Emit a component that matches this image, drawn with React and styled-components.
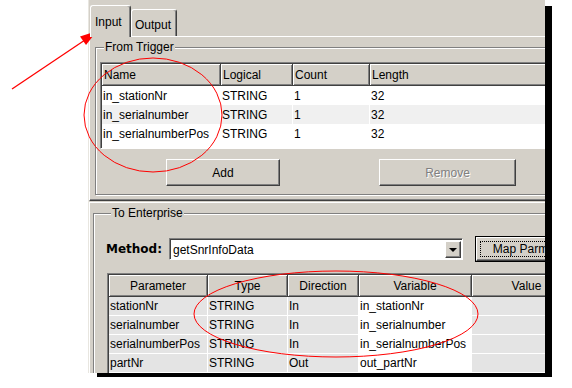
import React from "react";
import styled, { createGlobalStyle } from "styled-components";

const Global = createGlobalStyle`
  html, body { margin: 0; padding: 0; background: #fff; }
  body {
    width: 572px; height: 388px; overflow: hidden;
    font-family: "Liberation Sans", Arial, sans-serif;
    font-size: 12px; color: #000;
  }
  * { box-sizing: border-box; }
`;

const Page = styled.div`
  position: relative;
  width: 572px;
  height: 388px;
  padding-left: 88px;
`;

const Window = styled.div`
  width: 457px;
  height: 373px;
  background: #d4d0c8;
  overflow: hidden;
  box-shadow: 8px 5px 0 -1px #000;
  border-left: 1px solid #e8e6e0;
`;

const Inner = styled.div`
  width: 600px;
  display: flex;
  flex-direction: column;
`;

const TabStrip = styled.div`
  display: flex;
  align-items: flex-end;
  height: 36px;
  padding: 0 0 0 1px;
  position: relative;
  z-index: 1;
`;

const Tab = styled.div`
  height: ${(p) => (p.$active ? 32 : 27)}px;
  width: ${(p) => p.$w}px;
  margin-bottom: ${(p) => (p.$active ? -1 : 0)}px;
  background: #d4d0c8;
  border-top: 1px solid #fff;
  border-left: 1px solid #fff;
  border-right: 1px solid #404040;
  box-shadow: inset -1px 0 #808080;
  border-radius: 3px 3px 0 0;
  padding: ${(p) => (p.$active ? "9px 0 0 4px" : "8px 0 0 3px")};
  line-height: 14px;
  white-space: nowrap;
`;

const TabPanel = styled.div`
  height: 165px;
  border-top: 1px solid #fff;
  border-left: 1px solid #fff;
  border-bottom: 1px solid #404040;
  box-shadow: inset 0 -1px #808080;
  padding: 3px 0 0 5px;
`;

const Group = styled.fieldset`
  margin: 0;
  min-width: 0;
  height: ${(p) => p.$h}px;
  border: 1px solid #808080;
  box-shadow: inset 1px 1px #fff, 1px 1px #fff;
  padding: ${(p) => p.$pad};
`;

const Legend = styled.legend`
  margin-left: ${(p) => p.$ml}px;
  padding: 0 1px;
  line-height: 14px;
  background: #d4d0c8;
`;

const Frame = styled.div`
  border-style: solid;
  border-width: 1px;
  border-color: #808080 #fff #fff #808080;
  height: ${(p) => p.$h}px;
  width: ${(p) => p.$w}px;
  overflow: hidden;
`;

const GridTable = styled.div`
  display: grid;
  grid-template-columns: ${(p) => p.$cols};
  grid-template-rows: ${(p) => p.$head}px;
  grid-auto-rows: 19px;
  border-top: 1px solid #404040;
  border-left: 1px solid #404040;
  background: #fff;
  height: 100%;
  align-content: start;
`;

const HeadCell = styled.div`
  background: #d4d0c8;
  border-right: 1px solid #404040;
  border-bottom: 1px solid #404040;
  box-shadow: inset 1px 1px #fff, inset -1px -1px #808080;
  display: flex;
  align-items: center;
  justify-content: ${(p) => (p.$center ? "center" : "flex-start")};
  padding-left: ${(p) => (p.$center ? 0 : 2)}px;
  white-space: nowrap;
  overflow: hidden;
`;

const Cell = styled.div`
  background: ${(p) => p.$bg};
  border-right: 1px solid #fff;
  border-bottom: ${(p) => (p.$sep ? "1px solid #fff" : "none")};
  display: flex;
  align-items: center;
  padding-left: 1px;
  white-space: nowrap;
  overflow: hidden;
`;

const ButtonRow = styled.div`
  display: flex;
  gap: 99px;
  padding: 10px 0 0 66px;
`;

const Button = styled.div`
  width: ${(p) => p.$w}px;
  height: ${(p) => p.$h}px;
  background: #d4d0c8;
  border-style: solid;
  border-width: 1px;
  border-color: #fff #404040 #404040 #fff;
  box-shadow: inset -1px -1px #808080;
  display: flex;
  align-items: center;
  justify-content: center;
  color: ${(p) => (p.$disabled ? "#808080" : "#000")};
  text-shadow: ${(p) => (p.$disabled ? "1px 1px #fff" : "none")};
  white-space: nowrap;
`;

const DefaultButton = styled.div`
  width: ${(p) => p.$w}px;
  height: 26px;
  border: 1px solid #000;
  flex: none;
`;

const DefaultFace = styled.div`
  height: 100%;
  background: #d4d0c8;
  border-style: solid;
  border-width: 1px;
  border-color: #fff #404040 #404040 #fff;
  box-shadow: inset -1px -1px #808080;
  padding: 3px;
`;

const FocusRect = styled.div`
  height: 100%;
  border: 1px dotted #000;
  display: flex;
  align-items: center;
  justify-content: center;
  white-space: nowrap;
`;

const LowerPanel = styled.div`
  flex: 1;
  margin-top: 1px;
  border-top: 1px solid #fff;
  border-left: 1px solid #fff;
  padding: 3px 0 0 3px;
`;

const MethodRow = styled.div`
  display: flex;
  align-items: center;
  gap: 10px;
  height: 26px;
`;

const MethodLabel = styled.span`
  font-family: "DejaVu Sans", Verdana, sans-serif;
  font-weight: bold;
  font-size: 12px;
  width: 53px;
`;

const Combo = styled.div`
  width: 294px;
  height: 22px;
  border-style: solid;
  border-width: 1px;
  border-color: #808080 #fff #fff #808080;
  flex: none;
  margin-right: 2px;
`;

const ComboInner = styled.div`
  height: 100%;
  border-top: 1px solid #404040;
  border-left: 1px solid #404040;
  background: #fff;
  display: flex;
  align-items: center;
  justify-content: space-between;
  padding: 0 1px 0 2px;
`;

const DropButton = styled.div`
  width: 16px;
  height: 17px;
  background: #d4d0c8;
  border-style: solid;
  border-width: 1px;
  border-color: #fff #404040 #404040 #fff;
  box-shadow: inset -1px -1px #808080;
  display: flex;
  align-items: center;
  justify-content: center;
`;

const Arrow = styled.div`
  width: 0;
  height: 0;
  border-left: 4px solid transparent;
  border-right: 4px solid transparent;
  border-top: 4px solid #000;
`;

const ParamWrap = styled.div`
  margin: 11px 0 0 1px;
`;

const Overlay = styled.svg`
  position: absolute;
  left: 0;
  top: 0;
  pointer-events: none;
`;

const trigger = [
  ["in_stationNr", "STRING", "1", "32"],
  ["in_serialnumber", "STRING", "1", "32"],
  ["in_serialnumberPos", "STRING", "1", "32"],
];

const params = [
  ["stationNr", "STRING", "In", "in_stationNr", ""],
  ["serialnumber", "STRING", "In", "in_serialnumber", ""],
  ["serialnumberPos", "STRING", "In", "in_serialnumberPos", ""],
  ["partNr", "STRING", "Out", "out_partNr", ""],
];

export default function App() {
  return (
    <>
      <Global />
      <Page>
        <Window>
          <Inner>
            <TabStrip>
              <Tab $active $w={41}>Input</Tab>
              <Tab $w={46}>Output</Tab>
            </TabStrip>
            <TabPanel>
              <Group $h={155} $pad="8px 0 0 4px">
                <Legend $ml={4}>From Trigger</Legend>
                <Frame $h={87} $w={520}>
                  <GridTable $cols="119px 72px 77px 240px" $head={22}>
                    {["Name", "Logical", "Count", "Length"].map((h) => (
                      <HeadCell key={h}>{h}</HeadCell>
                    ))}
                    {trigger.map((r, i) =>
                      r.map((c, j) => (
                        <Cell key={i + "-" + j} $bg={i % 2 ? "#f0f0f0" : "#fff"}>
                          {c}
                        </Cell>
                      ))
                    )}
                  </GridTable>
                </Frame>
                <ButtonRow>
                  <Button $w={114} $h={27}>Add</Button>
                  <Button $w={137} $h={27} $disabled>Remove</Button>
                </ButtonRow>
              </Group>
            </TabPanel>
            <LowerPanel>
              <Group $h={200} $pad="16px 0 0 12px">
                <Legend $ml={5}>To Enterprise</Legend>
                <MethodRow>
                  <MethodLabel>Method:</MethodLabel>
                  <Combo>
                    <ComboInner>
                      <span>getSnrInfoData</span>
                      <DropButton>
                        <Arrow />
                      </DropButton>
                    </ComboInner>
                  </Combo>
                  <DefaultButton $w={97}>
                    <DefaultFace>
                      <FocusRect>Map Parms</FocusRect>
                    </DefaultFace>
                  </DefaultButton>
                </MethodRow>
                <ParamWrap>
                  <Frame $h={120} $w={480}>
                    <GridTable $cols="99px 80px 71px 113px 110px" $head={22}>
                      {["Parameter", "Type", "Direction", "Variable", "Value"].map((h) => (
                        <HeadCell key={h} $center>{h}</HeadCell>
                      ))}
                      {params.map((r, i) =>
                        r.map((c, j) => (
                          <Cell key={i + "-" + j} $sep $bg={j === 3 ? "#fff" : "#e4e4e4"}>
                            {c}
                          </Cell>
                        ))
                      )}
                    </GridTable>
                  </Frame>
                </ParamWrap>
              </Group>
            </LowerPanel>
          </Inner>
        </Window>
        <Overlay width="572" height="388" viewBox="0 0 572 388">
          <line x1="12" y1="89" x2="85" y2="40" stroke="#f00" strokeWidth="1.3" />
          <polygon points="97,31 80,36.5 86,45" fill="#f00" />
          <ellipse cx="153" cy="115" rx="69" ry="57" fill="none" stroke="#f00" strokeWidth="1" />
          <ellipse cx="336" cy="314" rx="142" ry="43" fill="none" stroke="#f00" strokeWidth="1" />
        </Overlay>
      </Page>
    </>
  );
}
